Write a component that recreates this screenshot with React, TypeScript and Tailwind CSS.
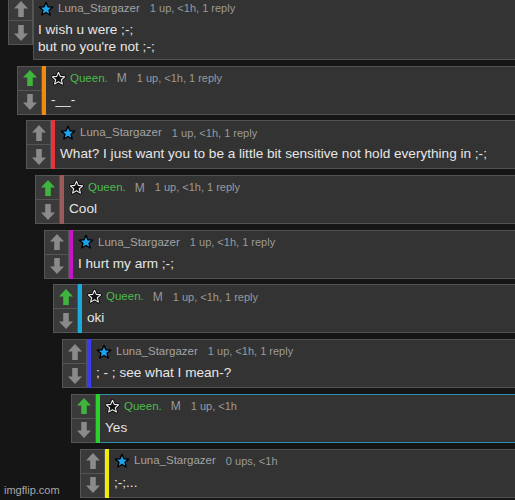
type Comment = {
  user: "luna" | "queen";
  meta: string;
  body: string[];
  bar?: string;
  highlight?: boolean;
};

const comments: Comment[] = [
  { user: "luna", meta: "1 up, <1h, 1 reply", body: ["I wish u were ;-;", "but no you're not ;-;"] },
  { user: "queen", meta: "1 up, <1h, 1 reply", body: ["-__-"], bar: "bg-[#f28a10]" },
  {
    user: "luna",
    meta: "1 up, <1h, 1 reply",
    body: ["What? I just want you to be a little bit sensitive not hold everything in ;-;"],
    bar: "bg-[#e8333a]",
  },
  { user: "queen", meta: "1 up, <1h, 1 reply", body: ["Cool"], bar: "bg-[#9c5a5a]" },
  { user: "luna", meta: "1 up, <1h, 1 reply", body: ["I hurt my arm ;-;"], bar: "bg-[#c814c8]" },
  { user: "queen", meta: "1 up, <1h, 1 reply", body: ["oki"], bar: "bg-[#16ace0]" },
  { user: "luna", meta: "1 up, <1h, 1 reply", body: ["; - ; see what I mean-?"], bar: "bg-[#3a3af2]" },
  { user: "queen", meta: "1 up, <1h", body: ["Yes"], bar: "bg-[#2bd02b]", highlight: true },
  { user: "luna", meta: "0 ups, <1h", body: [";-;..."], bar: "bg-[#eded0a]" },
];

const indents = [
  "ml-[8px]",
  "ml-[17px]",
  "ml-[26px]",
  "ml-[35px]",
  "ml-[44px]",
  "ml-[53px]",
  "ml-[62px]",
  "ml-[71px]",
  "ml-[80px]",
];

const STAR = "12,2 14.9,8.6 22,9.3 16.6,14 18.2,21 12,17.3 5.8,21 7.4,14 2,9.3 9.1,8.6";

function BlueStar() {
  return (
    <svg width="16" height="16" viewBox="0 0 24 24" className="shrink-0">
      <polygon points={STAR} fill="#1ea3ee" stroke="#000" strokeWidth="2" strokeLinejoin="round" />
    </svg>
  );
}

function OutlineStar() {
  return (
    <svg width="15" height="15" viewBox="0 0 24 24" className="shrink-0">
      <polygon points={STAR} fill="#111" stroke="#000" strokeWidth="4.5" strokeLinejoin="round" />
      <polygon points={STAR} fill="#111" stroke="#eee" strokeWidth="1.8" strokeLinejoin="round" />
    </svg>
  );
}

function Arrow({ up, color }: { up: boolean; color: string }) {
  return (
    <svg width="14" height="16" viewBox="0 0 14 16" className={up ? "" : "rotate-180"}>
      <polygon points="7,0 14,7.5 9.8,7.5 9.8,16 4.2,16 4.2,7.5 0,7.5" fill={color} />
    </svg>
  );
}

function Row({ c, i }: { c: Comment; i: number }) {
  const queen = c.user === "queen";
  return (
    <div className={`flex items-start ${indents[i]} ${i === 0 ? "-mt-[4px]" : "mt-[5.7px]"}`}>
      <div className="flex h-[49px] w-[25px] shrink-0 flex-col border border-[#555] bg-[#3a3a3a]">
        <div className="flex flex-1 items-center justify-center border-b border-[#555]">
          <Arrow up color={queen ? "#3fb53f" : "#8a8a8a"} />
        </div>
        <div className="flex flex-1 items-center justify-center">
          <Arrow up={false} color="#8a8a8a" />
        </div>
      </div>
      {c.bar && <div className={`w-[4px] self-stretch ${c.bar}`} />}
      <div
        className={`min-h-[49px] flex-1 border-y pb-[4px] pt-[3px] ${
          c.highlight ? "border-[#2b8fae]" : "border-[#525252]"
        } ${c.bar ? "pl-[5px]" : "border-l pl-[4px]"} bg-[#333333]`}
      >
        <div className="flex h-[17px] items-center text-[#9a9a9a]">
          <span className="mr-[4px] flex items-center">{queen ? <OutlineStar /> : <BlueStar />}</span>
          {queen ? (
            <>
              <span className="text-[11.5px] text-[#4cbb4c]">Queen.</span>
              <span className="ml-[9px] text-[12px]">M</span>
            </>
          ) : (
            <span className="text-[11.5px] text-[#a3a3a3]">Luna_Stargazer</span>
          )}
          <span className="ml-[10px] text-[11px]">{c.meta}</span>
        </div>
        <div className="mt-[4px] text-[13.6px] leading-[17px] text-[#e6e6e6]">
          {c.body.map((l, k) => (
            <div key={k}>{l}</div>
          ))}
        </div>
      </div>
    </div>
  );
}

export default function App() {
  return (
    <div
      className="relative h-[500px] w-[515px] overflow-hidden bg-[#151515]"
      style={{ fontFamily: '"Liberation Sans", Arial, sans-serif' }}
    >
      {comments.map((c, i) => (
        <Row key={i} c={c} i={i} />
      ))}
      <div className="absolute bottom-[2px] left-[4px] text-[11px] text-[#a8a8a8]">imgflip.com</div>
    </div>
  );
}
